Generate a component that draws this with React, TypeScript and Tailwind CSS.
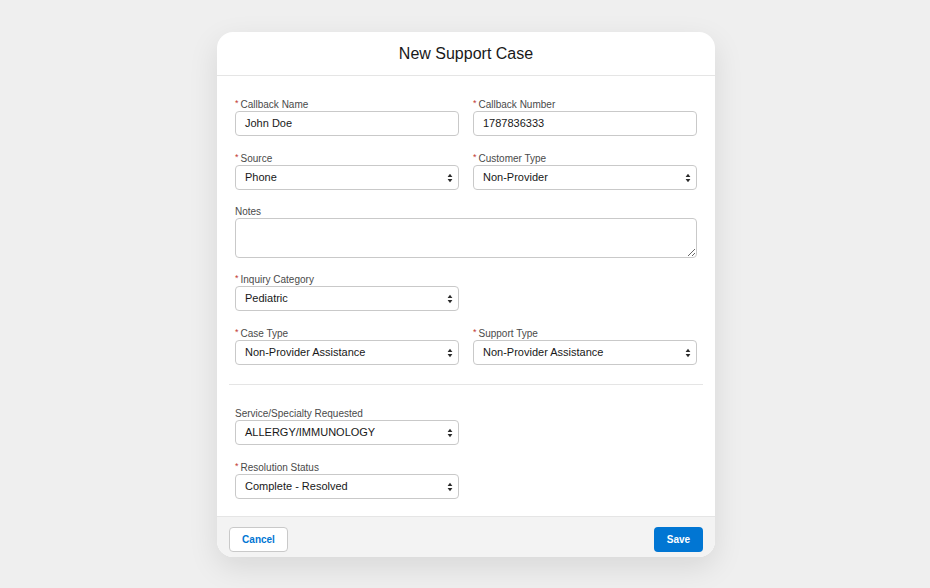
const font = { fontFamily: '"Liberation Sans", Arial, sans-serif' };

function Label({ text, required }: { text: string; required?: boolean }) {
  return (
    <div className="h-[13px] leading-[13px] text-[10px] text-[#4a4a4a] flex items-center">
      {required && <span className="text-[#c23934] text-[9px] mr-[2px] -mt-[2px]">*</span>}
      <span>{text}</span>
    </div>
  );
}

function TextInput({ label, value, required }: { label: string; value: string; required?: boolean }) {
  return (
    <div className="flex flex-col">
      <Label text={label} required={required} />
      <div className="h-[25px] border border-[#c9c9c9] rounded-[4px] bg-white flex items-center px-[9px] text-[11px] text-[#181818]">
        {value}
      </div>
    </div>
  );
}

function Arrows() {
  return (
    <svg width="6" height="10" viewBox="0 0 6 10" className="shrink-0">
      <path d="M3 0.8 L5.4 4 L0.6 4 Z" fill="#2b2b2b" />
      <path d="M3 9.2 L5.4 6 L0.6 6 Z" fill="#2b2b2b" />
    </svg>
  );
}

function SelectField({ label, value, required }: { label: string; value: string; required?: boolean }) {
  return (
    <div className="flex flex-col">
      <Label text={label} required={required} />
      <div className="h-[25px] border border-[#c9c9c9] rounded-[4px] bg-white flex items-center justify-between pl-[9px] pr-[5px] text-[11px] text-[#181818]">
        <span>{value}</span>
        <Arrows />
      </div>
    </div>
  );
}

export default function App() {
  return (
    <div className="min-h-[588px] w-full bg-[#efefef] pt-[32px] flex justify-center pl-[2px]" style={font}>
      <div className="w-[498px] h-fit rounded-2xl bg-white shadow-[0_10px_30px_rgba(0,0,0,0.10)] overflow-hidden">
        <div className="h-[44px] border-b border-[#e5e5e5] flex items-center justify-center">
          <h1 className="text-[16px] text-[#181818]">New Support Case</h1>
        </div>

        <div className="pt-[22px] pb-[17px]">
          <div className="px-[18px] flex flex-col gap-[16px]">
            <div className="grid grid-cols-2 gap-[14px]">
              <TextInput label="Callback Name" value="John Doe" required />
              <TextInput label="Callback Number" value="1787836333" required />
            </div>
            <div className="grid grid-cols-2 gap-[14px]">
              <SelectField label="Source" value="Phone" required />
              <SelectField label="Customer Type" value="Non-Provider" required />
            </div>
            <div className="flex flex-col -mt-px">
              <Label text="Notes" />
              <textarea className="h-[40px] border border-[#c9c9c9] rounded-[4px] bg-white resize-y px-[9px] py-[6px] text-[11px] outline-none" />
            </div>
            <div className="grid grid-cols-2 gap-[14px] -mt-px">
              <SelectField label="Inquiry Category" value="Pediatric" required />
              <div />
            </div>
            <div className="grid grid-cols-2 gap-[14px]">
              <SelectField label="Case Type" value="Non-Provider Assistance" required />
              <SelectField label="Support Type" value="Non-Provider Assistance" required />
            </div>
          </div>

          <div className="mx-[12px] mt-[19px] mb-[22px] border-t border-[#e5e5e5]" />

          <div className="px-[18px] flex flex-col gap-[16px]">
            <div className="grid grid-cols-2 gap-[14px]">
              <SelectField label="Service/Specialty Requested" value="ALLERGY/IMMUNOLOGY" />
              <div />
            </div>
            <div className="grid grid-cols-2 gap-[14px]">
              <SelectField label="Resolution Status" value="Complete - Resolved" required />
              <div />
            </div>
          </div>
        </div>

        <div className="bg-[#f3f3f3] border-t border-[#e5e5e5] h-[41px] px-[12px] pt-[10px] flex justify-between items-start">
          <button className="h-[25px] w-[59px] rounded-[4px] border border-[#c9c9c9] bg-white text-[10px] font-bold text-[#0176d3]">
            Cancel
          </button>
          <button className="h-[25px] w-[49px] rounded-[4px] bg-[#0176d3] text-[10px] font-bold text-white">
            Save
          </button>
        </div>
      </div>
    </div>
  );
}
